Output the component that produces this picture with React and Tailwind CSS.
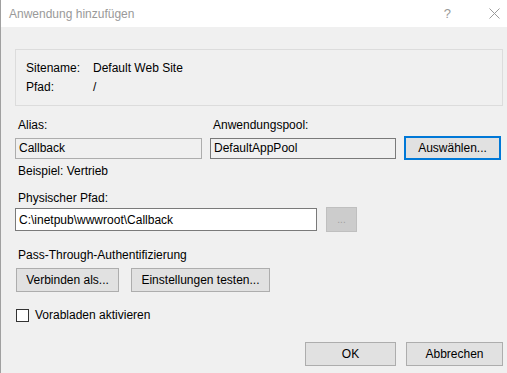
import React from 'react';

const font = { fontFamily: '"Liberation Sans", Arial, sans-serif' };

// Standard-Schaltfläche im Windows-Stil
const Button = ({ children, className = '' }) => (
  <button
    className={`flex items-center justify-center bg-[#e1e1e1] border border-[#adadad] text-[12px] text-black leading-none ${className}`}
  >
    {children}
  </button>
);

const TextBox = ({ value, className = '' }) => (
  <div className={`flex items-center pl-[3px] text-[12px] text-black ${className}`}>{value}</div>
);

export default function App() {
  return (
    <div className="w-[507px] h-[373px] bg-[#f0f0f0] border-l border-[#a0a0a0] flex flex-col overflow-hidden" style={font}>
      {/* Titelleiste */}
      <div className="h-[27px] bg-white flex items-center shrink-0">
        <span className="pl-[8px] text-[12px] text-[#999999]">Anwendung hinzufügen</span>
        <span className="ml-auto mr-[38px] text-[13px] text-[#999999]">?</span>
        <svg width="11" height="11" viewBox="0 0 11 11" className="mr-[7px]">
          <path d="M0.5 0.5 L10.5 10.5 M10.5 0.5 L0.5 10.5" stroke="#9a9a9a" strokeWidth="1" />
        </svg>
      </div>

      <div className="pl-[14px] pr-[4px] flex flex-col">
        {/* Gruppenfeld */}
        <div className="mt-[22px] h-[57px] border border-[#dcdcdc] pl-[10px] pt-[8px] text-[12px] text-black">
          <div className="flex h-[19px] items-center">
            <span className="w-[67px]">Sitename:</span>
            <span>Default Web Site</span>
          </div>
          <div className="flex h-[19px] items-center">
            <span className="w-[67px]">Pfad:</span>
            <span>/</span>
          </div>
        </div>

        {/* Alias / Anwendungspool */}
        <div className="mt-[11px] flex text-[12px] text-black h-[16px] items-center">
          <span className="w-[195px] pl-[3px]">Alias:</span>
          <span className="pl-[3px]">Anwendungspool:</span>
        </div>
        <div className="mt-[3px] flex items-center gap-[8px]">
          <TextBox value="Callback" className="w-[187px] h-[21px] border border-[#adadad] bg-[#f0f0f0]" />
          <TextBox value="DefaultAppPool" className="w-[186px] h-[21px] border border-[#7a7a7a] bg-[#f0f0f0]" />
          <Button className="w-[97px] h-[24px] !border-2 !border-[#0078d7]">Auswählen...</Button>
        </div>
        <div className="mt-[3px] h-[16px] flex items-center pl-[3px] text-[12px] text-black">Beispiel: Vertrieb</div>

        {/* Physischer Pfad */}
        <div className="mt-[11px] h-[16px] flex items-center pl-[3px] text-[12px] text-black">Physischer Pfad:</div>
        <div className="mt-[1px] flex items-center gap-[9px]">
          <TextBox value="C:\inetpub\wwwroot\Callback" className="w-[302px] h-[23px] border border-[#7a7a7a] bg-white" />
          <div className="w-[31px] h-[25px] bg-[#cccccc] border border-[#bfbfbf] flex items-center justify-center text-[10px] text-[#a0a0a0]">...</div>
        </div>

        {/* Pass-Through */}
        <div className="mt-[15px] h-[16px] flex items-center pl-[3px] text-[12px] text-black">Pass-Through-Authentifizierung</div>
        <div className="mt-[5px] pl-[1px] flex gap-[12px]">
          <Button className="w-[103px] h-[24px]">Verbinden als...</Button>
          <Button className="w-[139px] h-[24px]">Einstellungen testen...</Button>
        </div>

        {/* Checkbox */}
        <div className="mt-[15px] h-[16px] pl-[1px] flex items-center text-[12px] text-black">
          <div className="w-[13px] h-[13px] border border-[#333333] bg-white" />
          <span className="ml-[6px]">Vorabladen aktivieren</span>
        </div>

        {/* Dialogschaltflächen */}
        <div className="mt-[19px] flex justify-end gap-[10px] pr-[0px]">
          <Button className="w-[91px] h-[24px]">OK</Button>
          <Button className="w-[97px] h-[24px]">Abbrechen</Button>
        </div>
      </div>
    </div>
  );
}
